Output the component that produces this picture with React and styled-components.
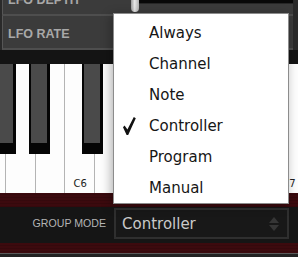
import React from "react";
import styled, { createGlobalStyle } from "styled-components";

const GlobalStyle = createGlobalStyle`
  html, body {
    margin: 0;
    padding: 0;
    background: #2a2a2a;
  }
  body {
    width: 298px;
    height: 257px;
    overflow: hidden;
  }
`;

const modes = ["Always", "Channel", "Note", "Controller", "Program", "Manual"];
const selectedMode = "Controller";

const whiteKeys = [
  { note: "G5" },
  { note: "A5" },
  { note: "B5" },
  { note: "C6", label: "C6" },
  { note: "D6" },
  { note: "E6" },
  { note: "F6" },
  { note: "G6" },
  { note: "A6" },
  { note: "B6" },
  { note: "C7", label: "C7" },
];

// left offset of each visible black key, in page pixels
const blackKeys = [-5, 29, 82];

const CheckIcon = () => (
  <CheckSvg viewBox="0 0 13 18">
    <path d="M0 10.2 L1.6 8.6 L4.4 12.4 L10.8 0 L12.8 1.2 L5.2 18 L3.6 18 Z" />
  </CheckSvg>
);

export default function App() {
  return (
    <Page>
      <GlobalStyle />
      <ParamList>
        <ParamRow>
          <ParamLabel>LFO DEPTH</ParamLabel>
          <SliderTrack>
            <SliderThumb />
          </SliderTrack>
        </ParamRow>
        <ParamRow>
          <ParamLabel>LFO RATE</ParamLabel>
        </ParamRow>
      </ParamList>
      <DarkBand />
      <Keyboard>
        {whiteKeys.map((k) => (
          <WhiteKey key={k.note}>{k.label && <KeyLabel>{k.label}</KeyLabel>}</WhiteKey>
        ))}
        {blackKeys.map((x) => (
          <BlackKey key={x} style={{ left: x }} />
        ))}
      </Keyboard>
      <Footer>
        <ControlStrip>
          <FieldLabel>GROUP MODE</FieldLabel>
          <SelectBox>
            <span>{selectedMode}</span>
            <Arrows viewBox="0 0 10 14">
              <path d="M5 0 L10 6 L0 6 Z" />
              <path d="M0 8 L10 8 L5 14 Z" />
            </Arrows>
          </SelectBox>
        </ControlStrip>
        <BottomLine />
      </Footer>
      <Menu>
        {modes.map((m) => (
          <MenuItem key={m}>
            <CheckCell>{m === selectedMode && <CheckIcon />}</CheckCell>
            <span>{m}</span>
          </MenuItem>
        ))}
      </Menu>
    </Page>
  );
}

const Page = styled.div`
  position: relative;
  width: 298px;
  height: 257px;
  overflow: hidden;
  background: #2a2a2a;
`;

const ParamList = styled.div`
  margin: -18px 5px 0 2px;
  display: flex;
  flex-direction: column;
`;

const ParamRow = styled.div`
  height: 32px;
  display: grid;
  grid-template-columns: 135px 1fr;
  align-items: center;
  background: #3b3b3b;
  border-left: 1px solid #565656;
  border-bottom: 2px solid #4e4e4e;
`;

const ParamLabel = styled.div`
  padding: 3px 0 0 5px;
  font-family: "Liberation Sans", Arial, sans-serif;
  font-weight: bold;
  font-size: 12.5px;
  color: #a8a8a8;
`;

const SliderTrack = styled.div`
  position: relative;
  height: 10px;
  background: #080808;
  box-shadow: 0 0 0 1px #262626;
`;

const SliderThumb = styled.div`
  position: absolute;
  left: -7px;
  top: -9px;
  width: 8px;
  height: 28px;
  border-radius: 4px;
  background: linear-gradient(90deg, #9a9a9a, #e8e8e8 45%, #b0b0b0);
`;

const DarkBand = styled.div`
  height: 14px;
  background: #141414;
`;

const Keyboard = styled.div`
  position: relative;
  height: 129px;
  display: flex;
  margin-left: -24px;
  background: #fff;
`;

const WhiteKey = styled.div`
  position: relative;
  flex: 0 0 29.8px;
  height: 100%;
  box-sizing: border-box;
  background: #fdfdfd;
  border-right: 1px solid #b4b4b4;
  display: flex;
  justify-content: center;
  align-items: flex-end;
`;

const KeyLabel = styled.span`
  margin: 0 0 4px 1px;
  font-family: "DejaVu Sans", Verdana, sans-serif;
  font-size: 10px;
  color: #222;
`;

const BlackKey = styled.div`
  position: absolute;
  top: 0;
  width: 21px;
  height: 90px;
  margin-left: 24px;
  box-sizing: border-box;
  background: #4a4a4a;
  border-left: 2px solid #050505;
  border-right: 3px solid #050505;
  border-bottom: 11px solid #050505;
`;

const Footer = styled.div`
  padding-top: 14px;
  background: repeating-linear-gradient(
      0deg,
      rgba(0, 0, 0, 0.12) 0 1px,
      transparent 1px 3px
    ),
    #3c0a0e;
`;

const ControlStrip = styled.div`
  height: 36px;
  box-sizing: border-box;
  padding: 1px 9px 0 0;
  background: #151515;
  display: flex;
  justify-content: flex-end;
  align-items: flex-start;
  gap: 8px;
`;

const FieldLabel = styled.span`
  line-height: 31px;
  font-family: "Liberation Sans", Arial, sans-serif;
  font-size: 10.6px;
  color: #b4b4b4;
`;

const SelectBox = styled.div`
  width: 175px;
  height: 31px;
  box-sizing: border-box;
  padding: 0 8px 0 6px;
  background: #181818;
  border: 2px solid #2f2f2f;
  display: flex;
  align-items: center;
  justify-content: space-between;
  font-family: "DejaVu Sans", Verdana, sans-serif;
  font-size: 15px;
  color: #c9c9c9;
`;

const Arrows = styled.svg`
  width: 10px;
  height: 14px;
  fill: #363636;
`;

const BottomLine = styled.div`
  margin-top: 10px;
  height: 1px;
  background: #5a5a5a;
  border-bottom: 4px solid #222;
`;

const Menu = styled.div`
  position: absolute;
  left: 113px;
  top: 13px;
  width: 176px;
  height: 191px;
  box-sizing: border-box;
  padding-top: 3px;
  background: #fff;
  border: 1px solid #8c8c8c;
  box-shadow: -2px 2px 10px rgba(0, 0, 0, 0.3);
`;

const MenuItem = styled.div`
  height: 31px;
  display: grid;
  grid-template-columns: 35px 1fr;
  align-items: center;
  font-family: "DejaVu Sans", Verdana, sans-serif;
  font-size: 15px;
  color: #161616;
`;

const CheckCell = styled.span`
  display: flex;
  align-items: center;
  padding-left: 9px;
`;

const CheckSvg = styled.svg`
  width: 13px;
  height: 18px;
  fill: #111;
`;
